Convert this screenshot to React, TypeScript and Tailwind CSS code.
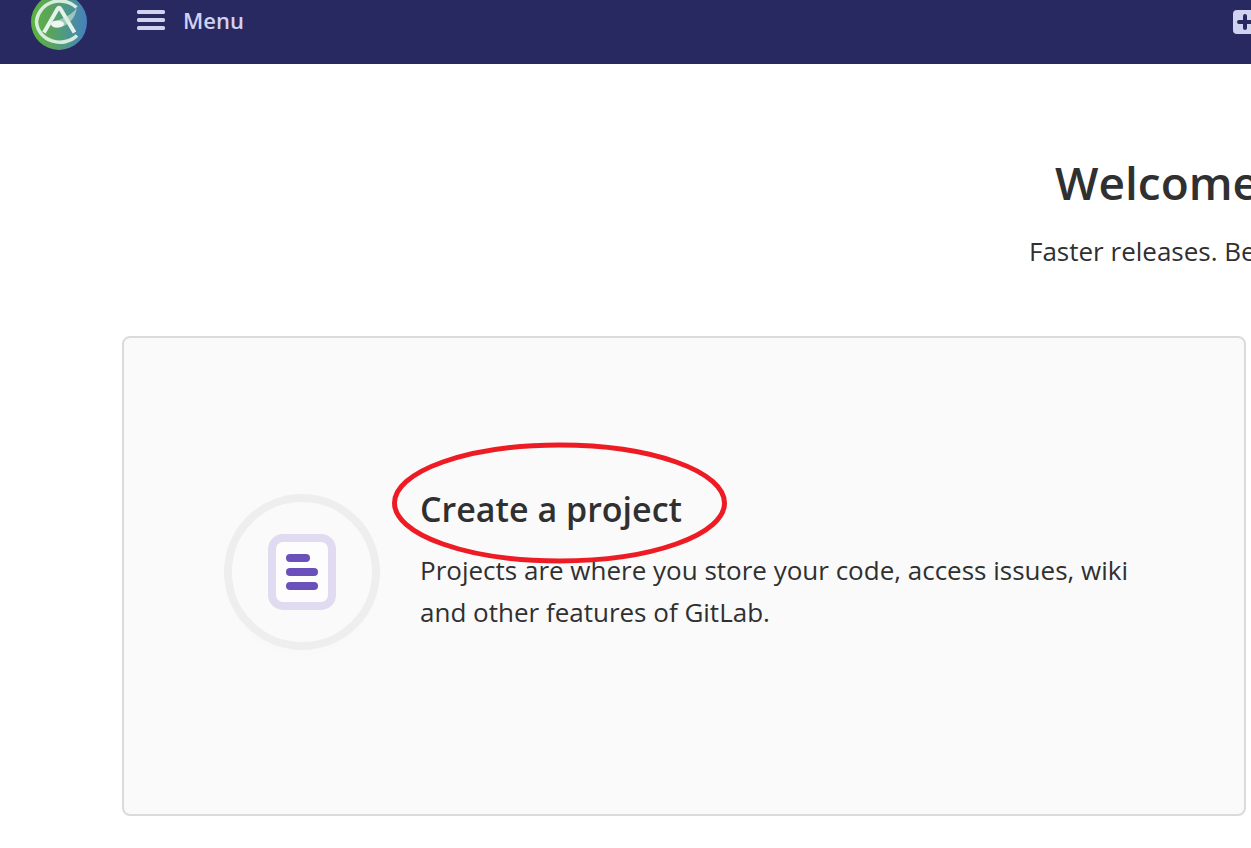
function Logo() {
  return (
    <svg viewBox="0 0 56 56" className="h-14 w-14 shrink-0" aria-hidden="true">
      <defs>
        <linearGradient id="logo-fill" x1="0" y1="0" x2="1" y2="0">
          <stop offset="0" stopColor="#59b53c" />
          <stop offset="0.35" stopColor="#5ba35c" />
          <stop offset="0.6" stopColor="#4e9a84" />
          <stop offset="1" stopColor="#4580c0" />
        </linearGradient>
      </defs>
      <circle cx="28" cy="28" r="28" fill="url(#logo-fill)" />
      <path
        d="M45.500 13.500A23.500 22.500 0 0 0 5.500 28A23.500 21.500 0 0 0 46 41.500"
        fill="none"
        stroke="#d6ecdd"
        strokeWidth="3.600"
      />
      <path d="M13 38.500L26.500 15Q28 12.500 29.500 15L43.500 38.500" fill="none" stroke="#e6f3ec" strokeWidth="4" />
      <path d="M20 29C28 25 38 24 46 14C44 24 38 31 30 33C25 34.500 20 34 20 29Z" fill="#d5eade" opacity="0.6" />
      <ellipse cx="26.500" cy="30" rx="6.500" ry="3.500" fill="#eef7f2" />
    </svg>
  );
}

function MenuIcon() {
  return (
    <svg viewBox="0 0 28 20" className="h-5 w-7" fill="#d1d1f0" aria-hidden="true">
      <rect width="28" height="4" rx="1.500" />
      <rect y="8" width="28" height="4" rx="1.500" />
      <rect y="16" width="28" height="4" rx="1.500" />
    </svg>
  );
}

function PlusIcon() {
  return (
    <svg viewBox="0 0 24 24" className="h-6 w-6" aria-hidden="true">
      <rect width="24" height="24" rx="4" fill="#d1d1f0" />
      <path d="M12 6V18M6 12H18" stroke="#292961" strokeWidth="4" strokeLinecap="round" />
    </svg>
  );
}

function ProjectIcon() {
  return (
    <svg viewBox="0 0 156 164" className="h-[164px] w-[156px] shrink-0" aria-hidden="true">
      <circle cx="78" cy="86" r="76" fill="#f9f9f9" />
      <circle cx="78" cy="78" r="74" fill="#fafafa" stroke="#eeeeee" strokeWidth="8" />
      <rect x="48" y="44" width="60" height="68" rx="11" fill="#fdfdfd" stroke="#e1dbf1" strokeWidth="8" />
      <g fill="#6b4fbb">
        <rect x="62" y="60" width="24" height="8" rx="4" />
        <rect x="62" y="74" width="32" height="8" rx="4" />
        <rect x="62" y="88" width="32" height="8" rx="4" />
      </g>
    </svg>
  );
}

export default function App() {
  return (
    <div className="min-h-screen overflow-hidden bg-white font-['Open_Sans',sans-serif] text-[#303030]">
      <header className="flex h-16 items-center overflow-hidden bg-[#292961] pb-5 pl-[31px]">
        <a href="#" aria-label="Home" className="shrink-0">
          <Logo />
        </a>
        <button
          type="button"
          className="ml-[50px] flex items-center gap-[18px] pb-1 text-[22px] leading-8 font-semibold text-[#d1d1f0]"
        >
          <MenuIcon />
          <span>Menu</span>
        </button>
        <button type="button" aria-label="Create new" className="-mr-1.5 ml-auto shrink-0">
          <PlusIcon />
        </button>
      </header>

      <main className="pt-[86px] pr-[5px] pb-8 pl-[122px]">
        <div className="-mr-[5px] flex justify-end">
          <div className="w-[222px] whitespace-nowrap">
            <h1 className="pl-[26px] text-[46px] leading-[64px] font-semibold">Welcome</h1>
            <p className="pt-4 text-[26px] leading-[42px]">Faster releases. Be</p>
          </div>
        </div>

        <section className="mt-16 flex min-h-[480px] items-center rounded-lg border-2 border-[#dbdbdb] bg-[#fafafa] pr-20 pl-[100px]">
          <ProjectIcon />
          <div className="ml-10 flex-1 pb-[34px]">
            <h2 className="relative text-[34px] leading-[48px] font-semibold">
              <a href="#">Create a project</a>
              <svg
                viewBox="0 0 336 122"
                className="pointer-events-none absolute -top-[43px] -left-7 h-[122px] w-[336px]"
                aria-hidden="true"
              >
                <ellipse cx="167.500" cy="61" rx="165" ry="58" fill="none" stroke="#ed1c24" strokeWidth="5" />
              </svg>
            </h2>
            <p className="mt-4 text-[26px] leading-[42px]">
              Projects are where you store your code, access issues, wiki and other features of GitLab.
            </p>
          </div>
        </section>
      </main>
    </div>
  );
}
